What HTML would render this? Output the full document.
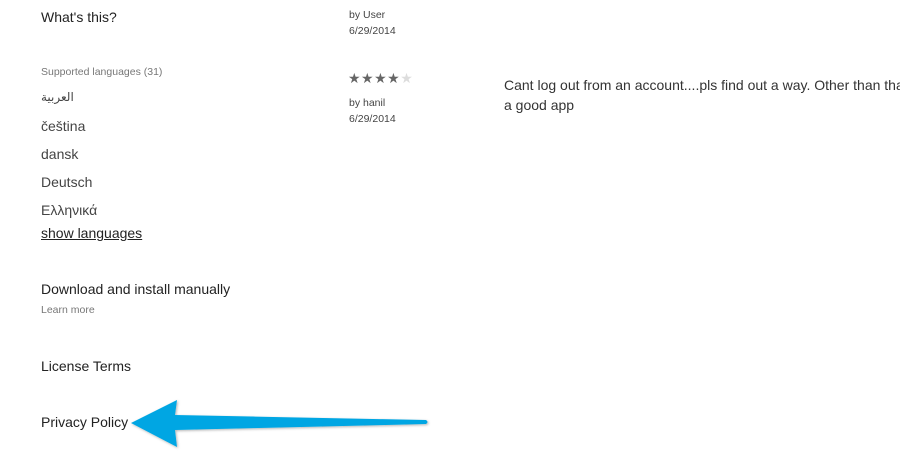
<!DOCTYPE html>
<html><head><style>
body{margin:0;width:900px;height:475px;background:#fff;position:relative;overflow:hidden;font-family:"Liberation Sans",sans-serif;color:#222}
.a{position:absolute;white-space:nowrap}
.s{font-size:14px}
.sm{font-size:10.5px;color:#444}
.g{color:#777;font-size:10.5px}
.l{color:#444;font-size:14px}
</style></head><body>
<div class="a s" style="left:41px;top:9px">What's this?</div>
<div class="a sm" style="left:349px;top:9px">by User</div>
<div class="a sm" style="left:349px;top:25px">6/29/2014</div>
<div class="a g" style="left:41px;top:66px">Supported languages (31)</div>
<div class="a" style="left:348px;top:70px;font-size:14px;color:#666;letter-spacing:0.5px">★★★★<span style="color:#ddd">★</span></div>
<div class="a sm" style="left:349px;top:97px">by hanil</div>
<div class="a sm" style="left:349px;top:113px">6/29/2014</div>
<div class="a s" style="left:504px;top:77px;color:#333">Cant log out from an account....pls find out a way. Other than tha</div>
<div class="a s" style="left:504px;top:97px;color:#333">a good app</div>
<div class="a" style="left:41px;top:90px;font-size:12px;color:#444;font-family:'DejaVu Sans',sans-serif">العربية</div>
<div class="a l" style="left:41px;top:118px">čeština</div>
<div class="a l" style="left:41px;top:146px">dansk</div>
<div class="a l" style="left:41px;top:174px">Deutsch</div>
<div class="a l" style="left:41px;top:202px">Ελληνικά</div>
<div class="a s" style="left:41px;top:225px;text-decoration:underline">show languages</div>
<div class="a s" style="left:41px;top:281px">Download and install manually</div>
<div class="a g" style="left:41px;top:304px">Learn more</div>
<div class="a s" style="left:41px;top:358px">License Terms</div>
<div class="a s" style="left:41px;top:414px">Privacy Policy</div>
<svg class="a" style="left:0;top:0" width="900" height="475">
<defs><filter id="f"><feDropShadow dx="1" dy="1" stdDeviation="1.2" flood-opacity="0.3"/></filter></defs>
<path d="M131,423 L177,400 L175,415 L426,420 Q429,422 426,424 L175,430 L177,447 Z" fill="#00a6e3" filter="url(#f)"/>
</svg>
</body></html>
